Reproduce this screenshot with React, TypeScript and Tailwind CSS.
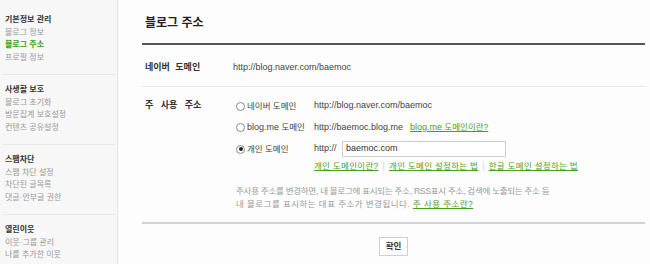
const font = "font-['Liberation_Sans','Noto_Sans_CJK_KR',sans-serif]";

type MenuGroup = { title: string; items: string[] };

const menu: MenuGroup[] = [
  { title: "기본정보 관리", items: ["블로그 정보", "블로그 주소", "프로필 정보"] },
  { title: "사생활 보호", items: ["블로그 초기화", "방문집계 보호설정", "컨텐츠 공유설정"] },
  { title: "스팸차단", items: ["스팸 차단 설정", "차단된 글목록", "댓글·안부글 권한"] },
  { title: "열린이웃", items: ["이웃·그룹 관리", "나를 추가한 이웃"] },
];

function Radio({ checked }: { checked?: boolean }) {
  return (
    <span className="w-[9px] h-[9px] rounded-full border border-[#8a8a8a] bg-white flex items-center justify-center shrink-0">
      {checked && <span className="w-[4px] h-[4px] rounded-full bg-[#222]" />}
    </span>
  );
}

function Sidebar() {
  return (
    <aside className="w-[118px] shrink-0 bg-[#f7f7f7] border-r border-[#e6e6e6] pt-[5px]">
      {menu.map((group, i) => (
        <div
          key={group.title}
          className={i < menu.length - 1 ? "mx-[2px] px-[3px] pt-[9px] pb-[10px] border-b border-[#e8e8e8]" : "mx-[2px] px-[3px] pt-[9px]"}
        >
          <div className="text-[8px] leading-[12.5px] font-bold text-[#333]">{group.title}</div>
          {group.items.map((item) => (
            <div
              key={item}
              className={
                item === "블로그 주소"
                  ? "text-[8px] leading-[12.5px] font-bold text-[#3c9e0a]"
                  : "text-[8px] leading-[12.5px] text-[#999]"
              }
            >
              {item}
            </div>
          ))}
        </div>
      ))}
    </aside>
  );
}

export default function App() {
  return (
    <div className={`${font} w-[650px] h-[264px] flex bg-[#fdfdfd] overflow-hidden`}>
      <Sidebar />
      <main className="flex-1 pl-[24px] pr-[5px]">
        <h1 className="pt-[16px] pb-[13px] pl-[3px] text-[12px] leading-[14px] font-bold text-[#222]">
          블로그 주소
        </h1>
        <div className="border-t-2 border-[#555]" />

        {/* 네이버 도메인 */}
        <div className="h-[42px] pt-[4px] flex items-center border-b border-[#e8e8e8]">
          <div className="w-[91px] pl-[3px] text-[9px] font-bold text-[#333] [word-spacing:3px]">네이버 도메인</div>
          <div className="text-[9px] text-[#444]">http://blog.naver.com/baemoc</div>
        </div>

        {/* 주 사용 주소 */}
        <div className="flex pt-[8px] pb-[11px] border-b-2 border-[#d2d2d2]">
          <div className="w-[94px] pl-[3px] h-[22px] flex items-center text-[9px] font-bold text-[#333] [word-spacing:5px]">
            주 사용 주소
          </div>
          <div className="flex-1 text-[8.5px]">
            <div className="h-[22px] flex items-center">
              <div className="w-[78px] flex items-center gap-[2px]">
                <Radio />
                <span className="text-[#444]">네이버 도메인</span>
              </div>
              <span className="text-[9px] text-[#444]">http://blog.naver.com/baemoc</span>
            </div>
            <div className="h-[21px] flex items-center">
              <div className="w-[78px] flex items-center gap-[2px]">
                <Radio />
                <span className="text-[#444]">
                  <span className="text-[9px]">blog.me</span> 도메인
                </span>
              </div>
              <span className="text-[9px] text-[#444]">http://baemoc.blog.me</span>
              <a className="ml-[7px] text-[#4d9f1e] underline">
                <span className="text-[9px]">blog.me</span> 도메인이란?
              </a>
            </div>
            <div className="h-[22px] flex items-center">
              <div className="w-[78px] flex items-center gap-[2px]">
                <Radio checked />
                <span className="text-[#444]">개인 도메인</span>
              </div>
              <span className="text-[9px] text-[#444] w-[28px]">http://</span>
              <div className="w-[164px] h-[16px] border border-[#cfcfcf] bg-white flex items-center pl-[3px] text-[9px] text-[#333]">
                baemoc.com
              </div>
            </div>
            <div className="h-[12px] pl-[78px] flex items-center text-[#4d9f1e] tracking-[0.3px]">
              <a className="underline">개인 도메인이란?</a>
              <span className="mx-[4px] text-[#d5d5d5]">|</span>
              <a className="underline">개인 도메인 설정하는 법</a>
              <span className="mx-[4px] text-[#d5d5d5]">|</span>
              <a className="underline">한글 도메인 설정하는 법</a>
            </div>
            <div className="mt-[12.5px] leading-[13px] text-[#999]">
              <div className="tracking-[-0.25px]">
                주사용 주소를 변경하면, 내 블로그에 표시되는 주소, RSS표시 주소, 검색에 노출되는 주소 등
              </div>
              <div className="tracking-[0.45px]">
                내 블로그를 표시하는 대표 주소가 변경됩니다.{" "}
                <a className="text-[#4d9f1e] underline">주 사용 주소란?</a>
              </div>
            </div>
          </div>
        </div>

        <div className="flex justify-center mt-[13px]">
          <button className="w-[29px] h-[19px] border border-[#cfcfcf] bg-white text-[8.5px] font-bold text-[#333]">
            확인
          </button>
        </div>
      </main>
    </div>
  );
}
